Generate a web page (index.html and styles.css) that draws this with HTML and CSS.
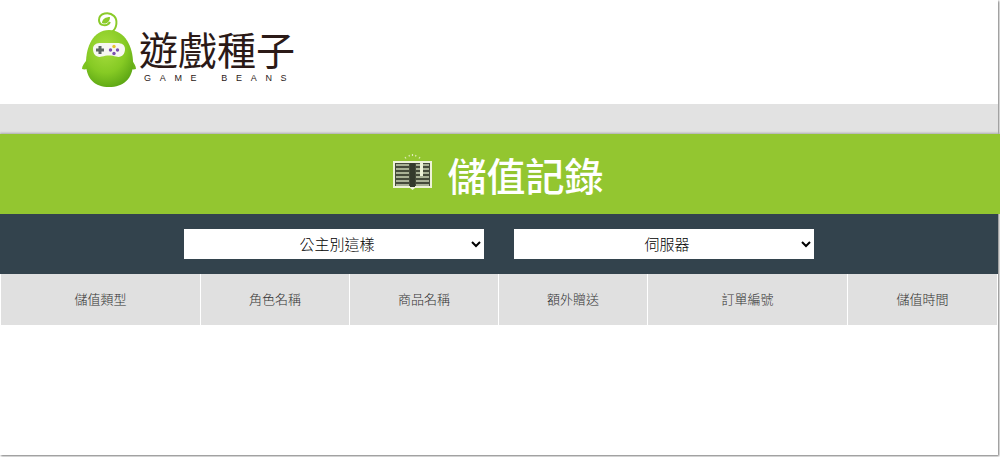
FILE: index.html
```html
<!DOCTYPE html>
<html lang="zh-Hant">
  <head>
    <meta charset="utf-8">
    <title>儲值記錄</title>
    <link rel="stylesheet" href="styles.css">
  </head>
  <body>
    <div class="page">
      <header class="top">
        <a class="logo" href="#">
          <svg class="logo-bean" width="56" height="78" viewBox="0 0 56 78">
            <defs>
              <radialGradient id="bean" cx="42%" cy="32%" r="72%">
                <stop offset="0" stop-color="#a8de3e"/>
                <stop offset="0.6" stop-color="#86ca24"/>
                <stop offset="1" stop-color="#5ca614"/>
              </radialGradient>
            </defs>
            <path d="M31 21 C36 17 37 9 33 5 C28 0 18 2 18 9 C18 15 26 16 29 11" fill="none" stroke="#8acb2a" stroke-width="2"/>
            <path d="M21 12 C21 8 25 6 29 6 C29 10 26 14 21 12 Z" fill="#8acb2a"/>
            <path d="M7 48 C3 52 1 55 1 58 C4 59 7 58 9 56 Z" fill="#7cc31f"/>
            <path d="M50 48 C53 52 55 55 55 58 C52 59 49 58 47 56 Z" fill="#6bb31a"/>
            <path d="M28 19 C44 19 52 36 52 52 C52 68 42 76 28 76 C14 76 5 68 5 52 C5 36 12 19 28 19 Z" fill="url(#bean)"/>
            <path d="M12 38 C12 33 16 32 20 32 L36 32 C41 32 44 34 44 38 C44 44 40 47 35 45.500 C31 44 25 44 21 45.500 C16 47 12 44 12 38 Z" fill="#f7f7f2"/>
            <path d="M17.500 35 h3 v2.500 h2.500 v3 h-2.500 v2.500 h-3 v-2.500 h-2.500 v-3 h2.500 Z" fill="#5a6460"/>
            <circle cx="33" cy="35.500" r="1.700" fill="#e6c52e"/>
            <circle cx="29.500" cy="39" r="1.700" fill="#7a4fb0"/>
            <circle cx="36.500" cy="39" r="1.700" fill="#7a4fb0"/>
            <circle cx="33" cy="42.500" r="1.700" fill="#7a4fb0"/>
          </svg>
          <span class="logo-text">
            <span class="logo-name">遊戲種子</span>
            <span class="logo-sub"><span>GAME</span><span>BEANS</span></span>
          </span>
        </a>
      </header>
      <div class="band"></div>
      <h1 class="title">
        <svg class="title-icon" width="41" height="38" viewBox="0 0 41 38">
          <path d="M1 8 H40 V35 H23 L20.500 37 L18 35 H1 Z" fill="#eef3d8"/>
          <path d="M3 10 H38 V33 H3 Z" fill="#454b3a"/>
          <path d="M4 12 H17 M4 16 H17 M4 20 H17 M4 24 H17 M4 28 H17 M4 32 H17 M24 12 H37 M24 16 H37 M24 20 H37 M24 24 H37 M24 28 H37 M24 32 H37" stroke="#a9b195" stroke-width="2"/>
          <rect x="28" y="8" width="3" height="15" fill="#eef3d8"/>
          <path d="M18 10 H23 V34 H18 Z" fill="#343a2c"/>
          <path d="M13 4 L14 5.500 M17 2 L17.500 3.500 M20.500 1 V3 M24 2 L23.500 3.500 M28 4 L27 5.500" stroke="#dfe9b8" stroke-width="1.200"/>
        </svg>
        儲值記錄
      </h1>
      <div class="filters">
        <select class="filter">
          <option>公主別這樣</option>
        </select>
        <select class="filter">
          <option>伺服器</option>
        </select>
      </div>
      <table class="records">
        <colgroup>
          <col class="col-wide">
          <col class="col-narrow">
          <col class="col-narrow">
          <col class="col-narrow">
          <col class="col-wide">
          <col class="col-last">
        </colgroup>
        <thead>
          <tr>
            <th>儲值類型</th>
            <th>角色名稱</th>
            <th>商品名稱</th>
            <th>額外贈送</th>
            <th>訂單編號</th>
            <th>儲值時間</th>
          </tr>
        </thead>
      </table>
    </div>
  </body>
</html>
```

FILE: styles.css
```css
html,
body {
  height: 100%;
  margin: 0;
  overflow: hidden;
  background-color: #fff;
}

body {
  font-family: "Noto Sans CJK TC", "Liberation Sans", sans-serif;
}

.page {
  width: 998px;
  height: 455px;
  box-shadow: 1px 1px 2px #777;
  background-color: #fff;
}

.top {
  height: 104px;
  padding-left: 81px;
  box-sizing: border-box;
}

.logo {
  display: inline-flex;
  align-items: flex-start;
  padding-top: 11px;
  text-decoration: none;
  color: #2b1a17;
}

.logo-bean {
  display: block;
  flex: none;
}

.logo-text {
  display: flex;
  flex-direction: column;
  margin-left: 2px;
  padding-top: 15px;
}

.logo-name {
  font-size: 39px;
  line-height: 44px;
  font-weight: 400;
  white-space: nowrap;
}

.logo-sub {
  display: flex;
  gap: 16px;
  margin-top: 3px;
  padding-left: 5px;
  font-family: "Liberation Sans", sans-serif;
  font-size: 9px;
  line-height: 10px;
  letter-spacing: 8.700px;
  white-space: nowrap;
}

.band {
  height: 30px;
  background-color: #e2e2e2;
}

.title {
  display: flex;
  justify-content: center;
  align-items: center;
  gap: 14px;
  height: 80px;
  margin: 0;
  padding-right: 4px;
  box-sizing: border-box;
  width: 1000px;
  background-color: #93c630;
  box-shadow: 0 -1px 2px #aaa;
  color: #fff;
  font-size: 39px;
  font-weight: 500;
  line-height: 80px;
}

.title-icon {
  display: block;
  flex: none;
  margin-top: -4px;
}

.filters {
  display: flex;
  justify-content: center;
  gap: 30px;
  align-items: center;
  width: 998px;
  height: 60px;
  background-color: #33434d;
}

.filter {
  width: 300px;
  height: 30px;
  padding: 0 0 2px 18px;
  border: none;
  border-radius: 0;
  background-color: #fff;
  color: #000;
  font-family: "Noto Sans CJK TC", sans-serif;
  font-size: 15px;
  font-weight: 300;
  text-align: center;
}

.records {
  width: 997px;
  border-collapse: separate;
  border-spacing: 0;
  table-layout: fixed;
}

.col-wide {
  width: 200px;
}

.col-narrow {
  width: 149px;
}

.col-last {
  width: 150px;
}

.records th {
  height: 51px;
  padding: 0 0 3px;
  border-left: 1px solid #fff;
  box-sizing: border-box;
  background-color: #e0e0e0;
  color: #333;
  font-size: 13px;
  font-weight: 300;
  text-align: center;
}
```
